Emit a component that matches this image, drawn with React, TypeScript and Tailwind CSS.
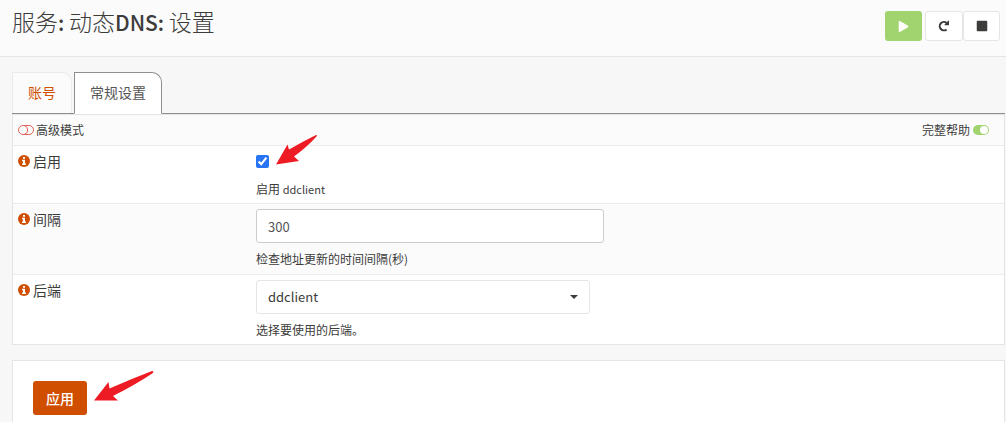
import { useState } from 'react';
import type { ReactNode } from 'react';
import { FaPlay, FaStop } from 'react-icons/fa';

const tabs = ['账号', '常规设置'];

function ReloadIcon() {
  return (
    <svg viewBox="0 0 12 12" className="size-3" aria-hidden="true">
      <path d="M8.6 9.4A4.2 4.2 0 1 1 8.6 2.9" fill="none" stroke="currentColor" strokeWidth="2" />
      <path d="M11 0.8v4.4H6.6V4.4L10.2 0.8z" fill="currentColor" />
    </svg>
  );
}

function InfoIcon() {
  return (
    <svg viewBox="0 0 12 12" className="size-3 shrink-0 text-[#d04e00]" aria-hidden="true">
      <circle cx="6" cy="6" r="6" fill="currentColor" />
      <path d="M5 2h2v1.7H5zM4 4.8h3v3.7h1V10H4V8.5h1V6.2H4z" fill="#fff" />
    </svg>
  );
}

function ToggleOffIcon() {
  return (
    <svg viewBox="0 0 16 10" className="h-[10px] w-4 text-[#e8605b]" aria-hidden="true">
      <g fill="none" stroke="currentColor">
        <rect x="0.5" y="0.5" width="15" height="9" rx="4.5" />
        <path d="M6.5 0.7a4.5 4.5 0 0 1 0 8.6" />
      </g>
    </svg>
  );
}

function ToggleOnIcon() {
  return (
    <svg viewBox="0 0 16 10" className="h-[10px] w-4 text-[#a1d36e]" aria-hidden="true">
      <rect width="16" height="10" rx="5" fill="currentColor" />
      <circle cx="11" cy="5" r="4" fill="#fff" />
    </svg>
  );
}

interface SettingRowProps {
  id: string;
  label: string;
  help: ReactNode;
  shaded?: boolean;
  children: ReactNode;
}

function SettingRow({ id, label, help, shaded, children }: SettingRowProps) {
  return (
    <div
      className={`grid grid-cols-[238px_1fr] border-t border-[#ebebeb] px-[5px] pt-[5px] ${
        shaded ? 'bg-[#fbfbfb] pb-[7px]' : 'bg-white pb-[6px]'
      }`}
    >
      <label htmlFor={id} className="flex h-5 items-center gap-[3px]">
        <InfoIcon />
        {label}
      </label>
      <div>
        {children}
        <p className="mt-2 text-xs leading-4">{help}</p>
      </div>
    </div>
  );
}

export default function App() {
  const [activeTab, setActiveTab] = useState('常规设置');
  const [enabled, setEnabled] = useState(true);
  const [interval, setInterval] = useState('300');

  return (
    <div className="min-h-screen bg-[#f7f7f7] font-['Noto_Sans_CJK_SC',sans-serif] text-sm leading-5 text-[#3c3c3b]">
      <header className="flex h-[57px] items-start justify-between border-b border-[#e5e5e5] bg-[#fbfbfb] pr-[6px] pl-3">
        <h1 className="mt-[5px] text-[23px] leading-8 font-light">
          服务<span className="text-[21px] font-medium">: </span>动态
          <span className="text-[21px] font-medium">DNS: </span>设置
        </h1>
        <div className="mt-[11px] flex">
          <button
            aria-label="启动"
            className="mr-[3px] flex h-[30px] w-[37px] items-center justify-center rounded-[3px] bg-[#a1d36e] text-white"
          >
            <FaPlay size={11} />
          </button>
          <button
            aria-label="重启"
            className="flex h-[30px] w-[38px] items-center justify-center rounded-[3px] border border-[#e5e5e5] bg-white"
          >
            <ReloadIcon />
          </button>
          <button
            aria-label="停止"
            className="flex h-[30px] w-[37px] items-center justify-center rounded-[3px] border border-[#e5e5e5] bg-white"
          >
            <FaStop size={12} />
          </button>
        </div>
      </header>

      <main className="pt-[15px] pr-px pl-3">
        <nav className="flex h-[42px] gap-[2px] border-b border-[#8f8f8f]">
          {tabs.map((tab) => (
            <button
              key={tab}
              onClick={() => setActiveTab(tab)}
              className={`rounded-tr-[10px] border px-[15px] pb-[2px] ${
                tab === activeTab
                  ? '-mb-px border-[#8f8f8f] border-b-white bg-white text-[#555]'
                  : 'border-b-0 border-[#ebebeb] bg-[#fbfbfb] text-[#d04e00]'
              }`}
            >
              {tab}
            </button>
          ))}
        </nav>

        <section className="border border-[#e5e5e5]">
          <div className="flex h-[30px] items-center justify-between bg-[#fbfbfb] pr-[15px] pl-[5px] text-xs">
            <button className="flex items-center gap-[2px]">
              <ToggleOffIcon />
              高级模式
            </button>
            <button className="flex items-center gap-[3px]">
              完整帮助
              <ToggleOnIcon />
            </button>
          </div>

          <SettingRow
            id="enabled"
            label="启用"
            help={
              <>
                启用 <span className="text-[11px]">ddclient</span>
              </>
            }
          >
            <div className="flex h-[22px] items-start pt-1">
              <input
                id="enabled"
                type="checkbox"
                checked={enabled}
                onChange={(e) => setEnabled(e.target.checked)}
                className="size-[13px] accent-[#2775f5]"
              />
            </div>
          </SettingRow>

          <SettingRow id="interval" label="间隔" help="检查地址更新的时间间隔(秒)" shaded>
            <input
              id="interval"
              type="text"
              value={interval}
              onChange={(e) => setInterval(e.target.value)}
              className="block h-[34px] w-full max-w-[348px] rounded-[3px] border border-[#ccc] bg-white px-[11px] text-[13px] text-[#555]"
            />
          </SettingRow>

          <SettingRow id="backend" label="后端" help="选择要使用的后端。">
            <div className="grid max-w-[334px] items-center">
              <select
                id="backend"
                className="col-start-1 row-start-1 h-[34px] appearance-none rounded-[3px] border border-[#e5e5e5] bg-white px-[11px] text-[13px]"
              >
                <option>ddclient</option>
                <option>native</option>
              </select>
              <span className="pointer-events-none col-start-1 row-start-1 mr-3 justify-self-end border-x-4 border-t-4 border-x-transparent border-t-[#3c3c3b]" />
            </div>
          </SettingRow>
        </section>

        <section className="mt-[15px] border border-[#e5e5e5] bg-white px-5 py-5">
          <button className="h-[34px] rounded-[3px] bg-[#d04e00] px-[13px] font-medium text-white">应用</button>
        </section>
      </main>

      {/* red arrows pointing at the checkbox and the apply button */}
      <svg viewBox="0 0 41 31" className="pointer-events-none absolute top-[134px] left-[276px] h-[31px] w-[41px]" aria-hidden="true">
        <path d="M0 30.5 11.5 10.5 13 15.5 Q26 8 40 1Q42 1 40 3Q31 13 18 22.5L23 27z" fill="#ed1c24" />
      </svg>
      <svg viewBox="0 0 61 31" className="pointer-events-none absolute top-[371px] left-[94px] h-[31px] w-[61px]" aria-hidden="true">
        <path d="M0 29.5 14.5 11 15.5 17.5 Q37 8 58 0Q60 0 59 2Q41 14 19 25L24 29.5z" fill="#ed1c24" />
      </svg>
    </div>
  );
}
